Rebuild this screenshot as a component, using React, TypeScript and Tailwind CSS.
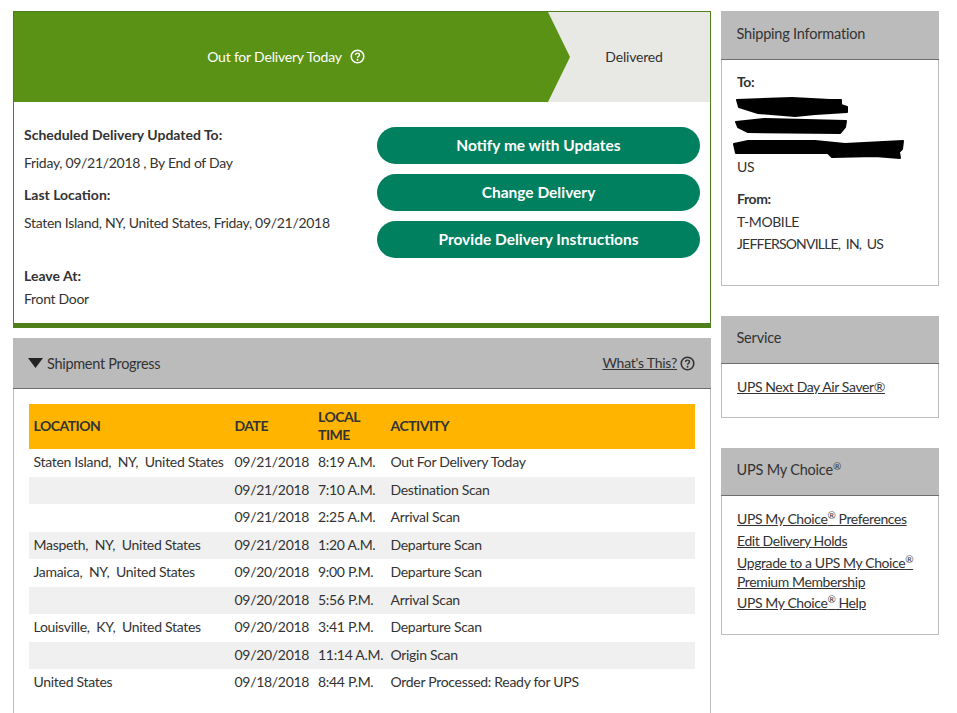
import React from 'react';

const font = { fontFamily: '"Lato", "Liberation Sans", sans-serif' };

const rows = [
  ['Staten Island,  NY,  United States', '09/21/2018', '8:19 A.M.', 'Out For Delivery Today'],
  ['', '09/21/2018', '7:10 A.M.', 'Destination Scan'],
  ['', '09/21/2018', '2:25 A.M.', 'Arrival Scan'],
  ['Maspeth,  NY,  United States', '09/21/2018', '1:20 A.M.', 'Departure Scan'],
  ['Jamaica,  NY,  United States', '09/20/2018', '9:00 P.M.', 'Departure Scan'],
  ['', '09/20/2018', '5:56 P.M.', 'Arrival Scan'],
  ['Louisville,  KY,  United States', '09/20/2018', '3:41 P.M.', 'Departure Scan'],
  ['', '09/20/2018', '11:14 A.M.', 'Origin Scan'],
  ['United States', '09/18/2018', '8:44 P.M.', 'Order Processed: Ready for UPS'],
];

const HelpIcon = ({ className }: { className: string }) => (
  <svg viewBox="0 0 16 16" className={className} fill="none" stroke="currentColor">
    <circle cx="8" cy="8" r="6.7" strokeWidth="1.7" />
    <path d="M5.900 6.400C5.900 5.100 6.800 4.400 8 4.400s2.100.8 2.100 1.900c0 1.600-2.100 1.500-2.100 3.100" strokeWidth="1.5" />
    <circle cx="8" cy="11.500" r="1" fill="currentColor" stroke="none" />
  </svg>
);

const SideCard = ({ title, children, bodyClass, headClass }: { title: React.ReactNode; children: React.ReactNode; bodyClass: string; headClass: string }) => (
  <div className="border border-[#bdbdbd] border-t-0 bg-white">
    <div className={`-mx-px flex items-center pl-[15.500px] pb-[3px] bg-[#bbbbbb] border-b border-[#6e6e6e] text-[14.5px] tracking-[-0.2px] text-[#333] ${headClass}`}>
      {title}
    </div>
    <div className={`px-[15px] text-[14px] tracking-[-0.4px] text-[#333] ${bodyClass}`}>{children}</div>
  </div>
);

const Button = ({ label }: { label: string }) => (
  <button className="h-[37px] w-full rounded-full bg-[#00805f] text-white font-bold text-[15.500px] tracking-normal">{label}</button>
);

export default function App() {
  return (
    <div className="w-[957px] h-[713px] overflow-hidden bg-white pt-[11px] pl-[13px] flex gap-[10px]" style={font}>
      <div className="w-[698px] shrink-0">
        <div className="border border-[#4e7f1a] border-b-[5px] h-[317px]">
          <div className="flex h-[90px] text-[14px] tracking-[-0.2px]">
            <div className="flex-1 bg-[#5a9216] text-white flex items-center justify-center gap-[8px] pb-[2px] pl-[10px]">
              <span>Out for Delivery Today</span>
              <HelpIcon className="w-[15px] h-[15px]" />
            </div>
            <div className="relative w-[162px] bg-[#e8e8e4] text-[#333] flex items-center justify-center pb-[2px] pl-[10px]">
              <svg viewBox="0 0 22 90" preserveAspectRatio="none" className="absolute left-0 top-0 w-[22px] h-[90px]">
                <polygon points="0,0 22,45 0,90" fill="#5a9216" />
              </svg>
              <span>Delivered</span>
            </div>
          </div>
          <div className="flex pl-[10px] pr-[10px] text-[14px] tracking-[-0.3px] text-[#333]">
            <div className="flex-1">
              <p className="mt-[23px] leading-[20px] font-bold tracking-normal">Scheduled Delivery Updated To:</p>
              <p className="mt-[8px] leading-[20px]">Friday, 09/21/2018 , By End of Day</p>
              <p className="mt-[12px] leading-[20px] font-bold tracking-normal">Last Location:</p>
              <p className="mt-[8px] leading-[20px]">Staten Island, NY, United States, Friday, 09/21/2018</p>
              <p className="mt-[33px] leading-[20px] font-bold tracking-normal">Leave At:</p>
              <p className="mt-[3px] leading-[20px]">Front Door</p>
            </div>
            <div className="w-[323px] shrink-0 pt-[25px] flex flex-col gap-[10px]">
              <Button label="Notify me with Updates" />
              <Button label="Change Delivery" />
              <Button label="Provide Delivery Instructions" />
            </div>
          </div>
        </div>

        <div className="mt-[10px] border-x border-[#bdbdbd] h-[400px]">
          <div className="-mx-px h-[51px] bg-[#bbbbbb] border-b border-[#6e6e6e] flex items-center pl-[15px] pr-[16px] text-[14.5px] tracking-[-0.3px] text-[#333]">
            <svg viewBox="0 0 12 8" className="w-[15px] h-[10px] mr-[4px] text-[#222]">
              <polygon points="0,0 12,0 6,8" fill="currentColor" />
            </svg>
            <span className="pt-[1px]">Shipment Progress</span>
            <a className="ml-auto underline text-[14px] tracking-[-0.25px] pb-[1px]">What's This?</a>
            <HelpIcon className="ml-[3px] w-[15px] h-[15px]" />
          </div>
          <div className="px-[15px] pt-[15px]">
            <table className="w-[666px] table-fixed border-collapse text-[14px] tracking-[-0.3px] text-[#333]">
              <colgroup>
                <col className="w-[201px]" />
                <col className="w-[83.500px]" />
                <col className="w-[72.500px]" />
                <col />
              </colgroup>
              <thead>
                <tr className="h-[45px] bg-[#ffb500] text-[#333] text-left leading-[18px]">
                  <th className="pl-[4.500px] pb-[2px] font-bold tracking-[-0.5px]">LOCATION</th>
                  <th className="pl-[4.500px] pb-[2px] font-bold tracking-[-0.5px]">DATE</th>
                  <th className="pl-[4.500px] pb-[2px] font-bold tracking-[-0.5px]">LOCAL TIME</th>
                  <th className="pl-[4.500px] pb-[2px] font-bold tracking-[-0.5px]">ACTIVITY</th>
                </tr>
              </thead>
              <tbody>
                {rows.map((row, i) => (
                  <tr key={i} className={`h-[27.5px] ${i % 2 === 1 ? 'bg-[#f0f0f0]' : 'bg-white'}`}>
                    {row.map((cell, j) => (
                      <td key={j} className="pl-[4.500px] pb-[2px] whitespace-pre">{cell}</td>
                    ))}
                  </tr>
                ))}
              </tbody>
            </table>
          </div>
        </div>
      </div>

      <div className="w-[218px] shrink-0 flex flex-col gap-[30px]">
        <SideCard title="Shipping Information" headClass="h-[49px]" bodyClass="h-[225px] pt-[12px]">
          <div className="relative leading-[20px]">
            <p className="font-bold">To:</p>
            <svg viewBox="0 0 172 63" className="absolute left-[-4px] top-[25px] w-[172px] h-[63px]">
              <g fill="#000" stroke="#000" strokeWidth="2" strokeLinejoin="round">
                <path d="M4 3 59 1 97 3 108 3 108 8 114 10 114 15 82 17 62 19 25 16 6 10Z" />
                <path d="M3 25 32 22 113 24 112 30 107 36 15 35 5 30Z" />
                <path d="M1 47 15 44 82 44 112 47 170 44 169 52 166 55 167 61 142 59 99 60 95 56 35 56 3 56Z" />
              </g>
            </svg>
            <p className="mt-[65px] leading-[20px]">US</p>
            <p className="mt-[12px] font-bold">From:</p>
            <p className="mt-[3px]">T-MOBILE</p>
            <p className="mt-[2px] whitespace-pre tracking-[-0.8px]">JEFFERSONVILLE,  IN,  US</p>
          </div>
        </SideCard>
        <SideCard title="Service" headClass="h-[48px]" bodyClass="h-[53px] pt-[14px]">
          <a className="block underline leading-[18px]">UPS Next Day Air Saver®</a>
        </SideCard>
        <SideCard title={<span>UPS My Choice<sup className="text-[10px]">®</sup></span>} headClass="h-[48px]" bodyClass="h-[138px] pt-[14px]">
          <div className="leading-[18px]">
            <a className="block underline">UPS My Choice<sup className="text-[10px]">®</sup> Preferences</a>
            <a className="block underline mt-[4px]">Edit Delivery Holds</a>
            <a className="block underline mt-[3px] leading-[19px]">Upgrade to a UPS My Choice<sup className="text-[10px]">®</sup> Premium Membership</a>
            <a className="block underline mt-[3px]">UPS My Choice<sup className="text-[10px]">®</sup> Help</a>
          </div>
        </SideCard>
      </div>
    </div>
  );
}
